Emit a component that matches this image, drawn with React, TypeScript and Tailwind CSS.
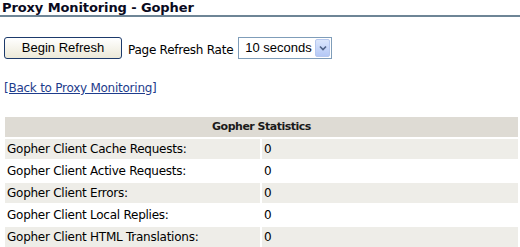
import React from "react";

const rows: [string, string][] = [
  ["Gopher Client Cache Requests:", "0"],
  ["Gopher Client Active Requests:", "0"],
  ["Gopher Client Errors:", "0"],
  ["Gopher Client Local Replies:", "0"],
  ["Gopher Client HTML Translations:", "0"],
];

export default function App() {
  return (
    <div className="w-[520px] h-[247px] bg-white overflow-hidden font-['DejaVu_Sans',sans-serif] text-[12px] tracking-[-0.25px] text-black">
      <div className="h-[17px] border-b-2 border-[#6e8596] pl-[2px] font-bold text-[13px] leading-[15px] tracking-[-0.1px] text-[#0a0a1e]">
        Proxy Monitoring - Gopher
      </div>
      <div className="mt-[20px] flex items-center h-[22px] pl-[4px]">
        <button className="w-[118px] h-[22px] rounded-[3px] border border-[#1c3a6b] bg-gradient-to-b from-[#ffffff] to-[#ece9d8] font-['Liberation_Sans',sans-serif] text-[13px] leading-[16px] tracking-normal text-black">
          Begin Refresh
        </button>
        <span className="ml-[6px] mt-[3px]">Page Refresh Rate</span>
        <div className="ml-[5px] w-[94px] h-[22px] border border-[#7f9db9] flex items-center bg-white">
          <span className="flex-1 pl-[6px] font-['Liberation_Sans',sans-serif] text-[13px] leading-[16px] tracking-normal">10 seconds</span>
          <div className="w-[15px] h-[18px] mr-[1px] rounded-[2px] bg-gradient-to-b from-[#dbe6fc] to-[#b4c8f6] border border-[#b6c8ef] flex items-center justify-center">
            <svg width="8" height="6" viewBox="0 0 8 6">
              <path d="M1 1.5 L4 4.5 L7 1.5" stroke="#4d6185" strokeWidth="1.6" fill="none" />
            </svg>
          </div>
        </div>
      </div>
      <div className="mt-[21px] pl-[4px] h-[16px] leading-[16px]">
        <a href="#" className="text-[#1e3c8c] underline">[Back to Proxy Monitoring]</a>
      </div>
      <div className="mt-[21px] ml-[5px] w-[513px] flex flex-col gap-[2px]">
        <div className="h-[20px] bg-[#dedbd4] flex items-center justify-center font-bold text-[11px] tracking-[-0.5px] text-[#1a1a1a]">
          Gopher Statistics
        </div>
        {rows.map(([label, value], i) => (
          <div key={label} className="h-[20px] flex gap-[2px]">
            <div className={`w-[255px] flex items-center pl-[2px] ${i % 2 === 0 ? "bg-[#eeede8]" : "bg-white"}`}>
              {label}
            </div>
            <div className={`flex-1 flex items-center pl-[2px] ${i % 2 === 0 ? "bg-[#eeede8]" : "bg-white"}`}>
              {value}
            </div>
          </div>
        ))}
      </div>
    </div>
  );
}
